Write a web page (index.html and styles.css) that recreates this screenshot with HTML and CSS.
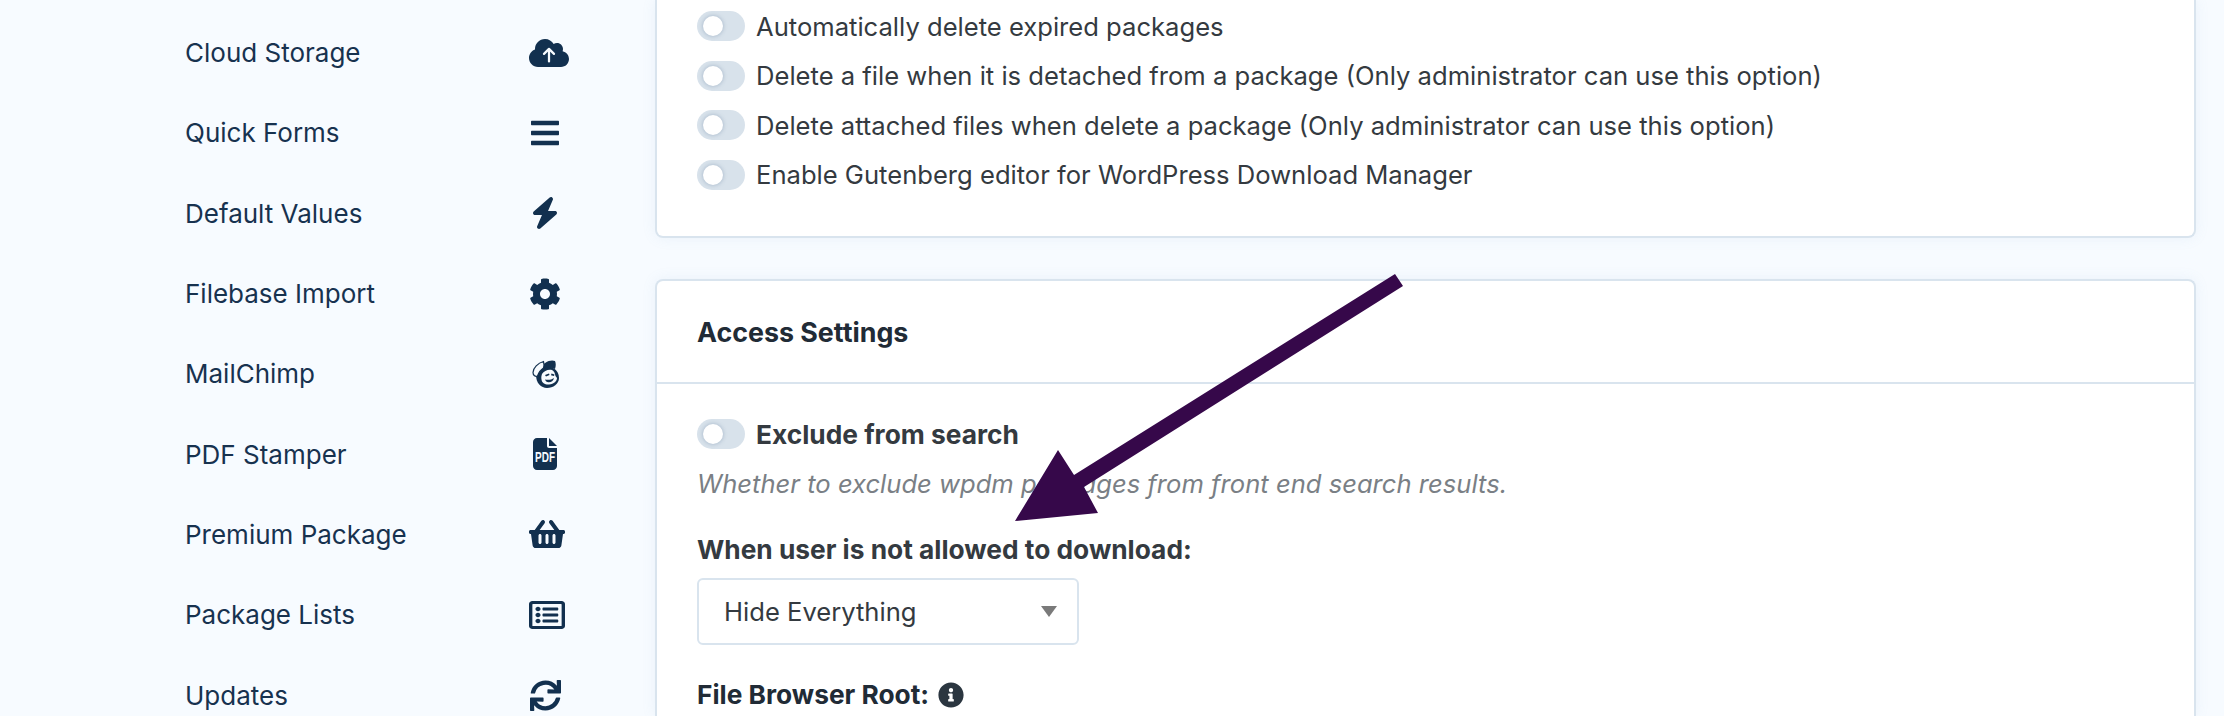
FILE: index.html
```html
<!DOCTYPE html>
<html lang="en">
  <head>
    <meta charset="utf-8">
    <title>Settings</title>
    <link rel="stylesheet" href="styles.css">
  </head>
  <body>
    <aside class="sidebar">
      <ul class="menu">
        <li class="menu-item">
          <span>Cloud Storage</span>
          <span class="menu-icon">
            <svg width="40" height="32" viewBox="0 0 640 512"><path d="M537.6 226.6c4.1-10.7 6.4-22.4 6.4-34.6 0-53-43-96-96-96-19.7 0-38.1 6-53.3 16.2C367 64.2 315.3 32 256 32c-88.4 0-160 71.6-160 160 0 2.7.1 5.4.2 8.1C40.2 219.8 0 273.2 0 336c0 79.5 64.5 144 144 144h368c70.7 0 128-57.3 128-128 0-61.9-44-113.6-102.4-125.4z"/><path class="cut" d="M320 390V190M240 270l80-80 80 80"/></svg>
          </span>
        </li>
        <li class="menu-item">
          <span>Quick Forms</span>
          <span class="menu-icon">
            <svg width="28" height="32" viewBox="0 0 448 512"><path d="M16 132h416c8.837 0 16-7.163 16-16V76c0-8.837-7.163-16-16-16H16C7.163 60 0 67.163 0 76v40c0 8.837 7.163 16 16 16zm0 160h416c8.837 0 16-7.163 16-16v-40c0-8.837-7.163-16-16-16H16c-8.837 0-16 7.163-16 16v40c0 8.837 7.163 16 16 16zm0 160h416c8.837 0 16-7.163 16-16v-40c0-8.837-7.163-16-16-16H16c-8.837 0-16 7.163-16 16v40c0 8.837 7.163 16 16 16z"/></svg>
          </span>
        </li>
        <li class="menu-item">
          <span>Default Values</span>
          <span class="menu-icon">
            <svg width="24" height="32" viewBox="32 0 384 512"><path d="M349.4 44.6c5.9-13.7 1.5-29.7-10.6-38.5s-28.6-8-39.9 1.8l-256 224c-10 8.8-13.6 22.9-8.9 35.3S50.7 288 64 288H175.5L98.6 467.4c-5.9 13.7-1.5 29.7 10.6 38.5s28.6 8 39.9-1.8l256-224c10-8.8 13.6-22.9 8.9-35.3s-16.6-20.7-30-20.7H272.5L349.4 44.6z"/></svg>
          </span>
        </li>
        <li class="menu-item">
          <span>Filebase Import</span>
          <span class="menu-icon">
            <svg width="32" height="32" viewBox="0 0 512 512"><path d="M487.4 315.7l-42.6-24.6c4.3-23.2 4.3-47 0-70.2l42.6-24.6c4.9-2.8 7.1-8.6 5.5-14-11.1-35.6-30-67.8-54.7-94.6-3.8-4.1-10-5.1-14.8-2.3L380.8 110c-17.9-15.4-38.5-27.3-60.8-35.1V25.8c0-5.6-3.9-10.5-9.4-11.7-36.7-8.2-74.3-7.8-109.2 0-5.5 1.2-9.4 6.1-9.4 11.7V75c-22.2 7.9-42.8 19.8-60.8 35.1L88.7 85.5c-4.9-2.8-11-1.9-14.8 2.3-24.7 26.7-43.6 58.9-54.7 94.6-1.7 5.4.6 11.2 5.5 14L67.3 221c-4.3 23.2-4.3 47 0 70.2l-42.6 24.6c-4.9 2.8-7.1 8.6-5.5 14 11.1 35.6 30 67.8 54.7 94.6 3.8 4.1 10 5.1 14.8 2.3l42.6-24.6c17.9 15.4 38.5 27.3 60.8 35.1v49.2c0 5.6 3.9 10.5 9.4 11.7 36.7 8.2 74.3 7.8 109.2 0 5.5-1.2 9.4-6.1 9.4-11.7v-49.2c22.2-7.9 42.8-19.8 60.8-35.1l42.6 24.6c4.9 2.8 11 1.9 14.8-2.3 24.7-26.7 43.6-58.9 54.7-94.6 1.5-5.5-.7-11.3-5.6-14.1zM256 336c-44.1 0-80-35.9-80-80s35.9-80 80-80 80 35.9 80 80-35.9 80-80 80z"/></svg>
          </span>
        </li>
        <li class="menu-item">
          <span>MailChimp</span>
          <span class="menu-icon">
            <svg width="32" height="32" viewBox="0 0 32 32">
              <!-- head, cap, hat band, face, eyes and mouth -->
              <path d="M7 17c0-5 4-9 10-9s13 4 13 12c0 6-6 10-12 10S7 25 7 17z"/>
              <path d="M12 10c2-5 9-9 14-7 1 2 1 5 0 8-4-2-10-2-14 2z"/>
              <path class="hat" d="M14.500 3.500C9 5 4 10 4 14.500c0 3 2.500 4.500 4.500 3.500 1-3 3-6 6-8 1-2 .5-4.500 0-6.500z"/>
              <path class="face" d="M13 16c2-3 6-5 10-4 2 1 3 3 3.500 6l1.500 2c0 3-3 6-8 6.500-4 .3-7-1.500-7.500-5-.5-2 0-4 .5-5.500z"/>
              <path d="M16 17l4-1.500.5 1.500-3.500 1.500zM22.500 15.500l3 1-.5 1.500-3-.8zM16 21.500c3 .8 6.500.3 9-1.500-.5 3-3 4.500-5.500 4.300-1.800-.1-3-1.200-3.500-2.800z"/>
            </svg>
          </span>
        </li>
        <li class="menu-item">
          <span>PDF Stamper</span>
          <span class="menu-icon">
            <svg width="24" height="32" viewBox="0 0 384 512"><path d="M0 64C0 28.700 28.700 0 64 0H224V128c0 17.700 14.300 32 32 32H384V448c0 35.300-28.700 64-64 64H64c-35.300 0-64-28.700-64-64V64zm384 64H256V0L384 128z"/><text class="pdf-label" x="267" y="379" transform="scale(0.72 1)">PDF</text></svg>
          </span>
        </li>
        <li class="menu-item">
          <span>Premium Package</span>
          <span class="menu-icon">
            <svg width="36" height="32" viewBox="0 0 576 512"><path d="M576 216v16c0 13.255-10.745 24-24 24h-8l-26.113 182.788C514.509 462.435 494.257 480 470.37 480H105.63c-23.887 0-44.139-17.565-47.518-41.212L32 256h-8c-13.255 0-24-10.745-24-24v-16c0-13.255 10.745-24 24-24h67.341l106.78-146.821c10.395-14.292 30.407-17.453 44.701-7.058 14.293 10.395 17.453 30.408 7.058 44.701L170.477 192h235.046L326.12 82.821c-10.395-14.292-7.234-34.306 7.059-44.701 14.291-10.395 34.306-7.235 44.701 7.058L484.659 192H552c13.255 0 24 10.745 24 24zM312 392V280c0-13.255-10.745-24-24-24s-24 10.745-24 24v112c0 13.255 10.745 24 24 24s24-10.745 24-24zm112 0V280c0-13.255-10.745-24-24-24s-24 10.745-24 24v112c0 13.255 10.745 24 24 24s24-10.745 24-24zm-224 0V280c0-13.255-10.745-24-24-24s-24 10.745-24 24v112c0 13.255 10.745 24 24 24s24-10.745 24-24z"/></svg>
          </span>
        </li>
        <li class="menu-item">
          <span>Package Lists</span>
          <span class="menu-icon">
            <svg width="36" height="32" viewBox="0 0 512 512" preserveAspectRatio="none"><path d="M464 32H48C21.490 32 0 53.490 0 80v352c0 26.510 21.490 48 48 48h416c26.510 0 48-21.490 48-48V80c0-26.510-21.490-48-48-48zm-6 400H54a6 6 0 0 1-6-6V86a6 6 0 0 1 6-6h404a6 6 0 0 1 6 6v340a6 6 0 0 1-6 6zm-42-92v24c0 6.627-5.373 12-12 12H204c-6.627 0-12-5.373-12-12v-24c0-6.627 5.373-12 12-12h200c6.627 0 12 5.373 12 12zm0-96v24c0 6.627-5.373 12-12 12H204c-6.627 0-12-5.373-12-12v-24c0-6.627 5.373-12 12-12h200c6.627 0 12 5.373 12 12zm0-96v24c0 6.627-5.373 12-12 12H204c-6.627 0-12-5.373-12-12v-24c0-6.627 5.373-12 12-12h200c6.627 0 12 5.373 12 12zm-252 12c0 19.882-16.118 36-36 36s-36-16.118-36-36 16.118-36 36-36 36 16.118 36 36zm0 96c0 19.882-16.118 36-36 36s-36-16.118-36-36 16.118-36 36-36 36 16.118 36 36zm0 96c0 19.882-16.118 36-36 36s-36-16.118-36-36 16.118-36 36-36 36 16.118 36 36z"/></svg>
          </span>
        </li>
        <li class="menu-item">
          <span>Updates</span>
          <span class="menu-icon">
            <svg width="31" height="31" viewBox="0 0 512 512"><path d="M440.650 12.570l4 82.770A247.160 247.160 0 0 0 255.830 8C134.730 8 33.910 94.920 12.290 209.820A12 12 0 0 0 24.090 224h49.050a12 12 0 0 0 11.670-9.260 175.910 175.910 0 0 1 317-56.940l-101.460-4.860a12 12 0 0 0-12.570 12v47.410a12 12 0 0 0 12 12H500a12 12 0 0 0 12-12V12a12 12 0 0 0-12-12h-47.370a12 12 0 0 0-11.980 12.570zM255.830 432a175.610 175.610 0 0 1-146-77.800l101.800 4.870a12 12 0 0 0 12.570-12v-47.400a12 12 0 0 0-12-12H12a12 12 0 0 0-12 12V500a12 12 0 0 0 12 12h47.350a12 12 0 0 0 12-12.600l-4.150-82.570A247.170 247.170 0 0 0 255.830 504c121.110 0 221.930-86.920 243.550-201.820a12 12 0 0 0-11.800-14.180h-49.050a12 12 0 0 0-11.670 9.260A175.860 175.860 0 0 1 255.830 432z"/></svg>
          </span>
        </li>
      </ul>
    </aside>

    <main class="content">
      <section class="card card-top">
        <div class="option"><span class="toggle"><i></i></span>Automatically delete expired packages</div>
        <div class="option"><span class="toggle"><i></i></span>Delete a file when it is detached from a package (Only administrator can use this option)</div>
        <div class="option"><span class="toggle"><i></i></span>Delete attached files when delete a package (Only administrator can use this option)</div>
        <div class="option"><span class="toggle"><i></i></span>Enable Gutenberg editor for WordPress Download Manager</div>
      </section>

      <section class="card card-bottom">
        <h2 class="card-title">Access Settings</h2>
        <div class="card-body">
          <div class="option option-strong"><span class="toggle"><i></i></span>Exclude from search</div>
          <p class="hint">Whether to exclude wpdm packages from front end search results.</p>
          <p class="field-label">When user is not allowed to download:</p>
          <div class="select">Hide Everything<span class="caret"></span></div>
          <p class="field-label browser-root">File Browser Root:
            <svg class="info" width="26" height="26" viewBox="0 0 512 512"><path d="M256 8C119.043 8 8 119.083 8 256c0 136.997 111.043 248 248 248s248-111.003 248-248C504 119.083 392.957 8 256 8zm0 110c23.196 0 42 18.804 42 42s-18.804 42-42 42-42-18.804-42-42 18.804-42 42-42zm56 254c0 6.627-5.373 12-12 12h-88c-6.627 0-12-5.373-12-12v-24c0-6.627 5.373-12 12-12h12v-64h-12c-6.627 0-12-5.373-12-12v-24c0-6.627 5.373-12 12-12h64c6.627 0 12 5.373 12 12v100h12c6.627 0 12 5.373 12 12v24z"/></svg>
          </p>
        </div>
      </section>
    </main>

    <!-- annotation drawn over the page -->
    <svg class="arrow" width="2224" height="716" viewBox="0 0 2224 716">
      <polygon points="1395,274 1403,286 1084,487 1098,513 1015,521 1058,450 1074,475"/>
    </svg>
  </body>
</html>
```

FILE: styles.css
```css
* {
  box-sizing: border-box;
  margin: 0;
  padding: 0;
}

html, body {
  height: 716px;
  overflow: hidden;
}

body {
  display: flex;
  background: #f7fbff;
  font-family: Inter, "Liberation Sans", sans-serif;
  font-size: 25.6px;
  color: #343a40;
}

.sidebar {
  flex: 0 0 655px;
  padding: 12.5px 94px 0 185px;
}

.menu {
  list-style: none;
}

.menu-item {
  display: flex;
  align-items: center;
  justify-content: space-between;
  height: 80.3px;
  font-size: 26px;
  color: #17324f;
}

.menu-icon {
  flex: 0 0 32px;
  width: 32px;
  fill: #12304f;
}

.menu-icon svg {
  display: block;
  margin: 0 auto;
}

.cut {
  fill: none;
  stroke: #f7fbff;
  stroke-width: 36;
  stroke-linecap: round;
  stroke-linejoin: round;
}

.hat {
  fill: #f7fbff;
  stroke: #12304f;
  stroke-width: 1.2;
}

.face {
  fill: #f7fbff;
}

.pdf-label {
  fill: #f7fbff;
  font-family: "Liberation Sans", sans-serif;
  font-weight: 700;
  font-size: 222px;
  text-anchor: middle;
}

.content {
  flex: 0 0 1541px;
  display: flex;
  flex-direction: column;
  height: 716px;
}

.card {
  background: #fff;
  border: 2px solid #d9e4ee;
  border-radius: 8px;
  box-shadow: 0 0 14px rgba(120, 160, 210, 0.1);
}

/* both cards run on past the edge of the frame */
.card-top {
  flex: 0 0 238px;
  margin-bottom: 41px;
  border-top: 0;
  border-top-left-radius: 0;
  border-top-right-radius: 0;
  padding: 11px 40px 0;
}

.card-bottom {
  flex: 1;
  border-bottom: 0;
  border-bottom-left-radius: 0;
  border-bottom-right-radius: 0;
}

.card-title {
  height: 103px;
  padding: 0 40px;
  display: flex;
  align-items: center;
  border-bottom: 2px solid #d9e4ee;
  font-size: 26.8px;
  font-weight: 700;
  color: #212b36;
}

.card-body {
  padding: 35px 40px 0;
}

.option {
  display: flex;
  align-items: center;
  gap: 11px;
  height: 30px;
  margin-bottom: 19.5px;
}

.option-strong {
  font-size: 26.3px;
  font-weight: 700;
  margin-bottom: 0;
}

.toggle {
  flex: 0 0 48px;
  height: 30px;
  padding: 5px 6px;
  border-radius: 15px;
  background: #d8e2eb;
}

.toggle i {
  display: block;
  width: 20px;
  height: 20px;
  border-radius: 50%;
  background: #fff;
  box-shadow: 0 0 4px rgba(90, 120, 150, 0.45);
}

.hint {
  margin-top: 20px;
  line-height: 30px;
  font-style: italic;
  color: #7a7f85;
}

.field-label {
  margin-top: 36px;
  line-height: 30px;
  font-size: 26.3px;
  font-weight: 700;
}

.select {
  display: flex;
  align-items: center;
  justify-content: space-between;
  width: 382px;
  height: 67px;
  margin-top: 13px;
  padding: 0 25px;
  border: 2px solid #d9e4ee;
  border-radius: 6px;
}

.caret {
  width: 0;
  height: 0;
  margin-right: -5px;
  border-left: 8px solid transparent;
  border-right: 8px solid transparent;
  border-top: 11px solid #7a7a7a;
}

.browser-root {
  display: flex;
  align-items: center;
  gap: 9px;
  margin-top: 35px;
  color: #212b36;
}

.info {
  fill: #2b3640;
}

.arrow {
  position: absolute;
  top: 0;
  left: 0;
  fill: #36084a;
  pointer-events: none;
}
```
